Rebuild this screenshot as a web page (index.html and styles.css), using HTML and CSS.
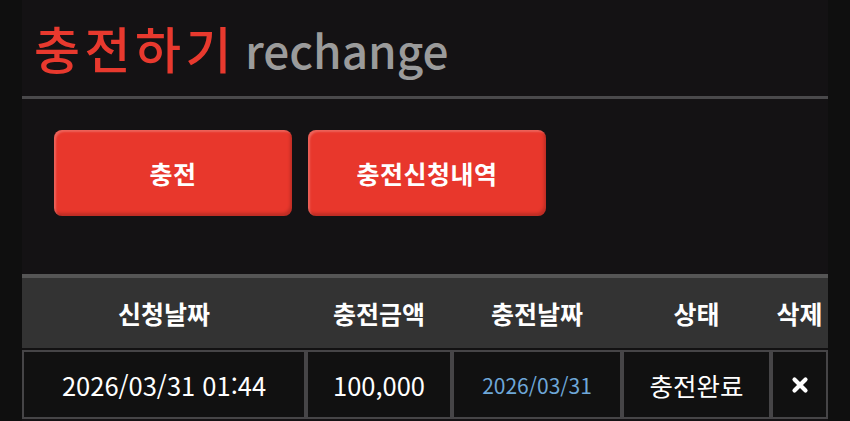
FILE: index.html
```html
<!DOCTYPE html>
<html lang="ko">
<head>
    <meta charset="UTF-8">
    <meta name="viewport" content="width=device-width, initial-scale=1.0">
    <title>충전하기</title>
    <link rel="stylesheet" href="styles.css">
</head>
<body>
    <div class="container">
        <h1 class="page-title">
            <span class="title-ko">충전하기</span>
            <span class="title-en">rechange</span>
        </h1>
        <div class="divider"></div>

        <div class="actions">
            <button class="btn-red">충전</button>
            <button class="btn-red">충전신청내역</button>
        </div>

        <table class="history">
            <thead>
                <tr>
                    <th class="col-date">신청날짜</th>
                    <th class="col-amount">충전금액</th>
                    <th class="col-done">충전날짜</th>
                    <th class="col-status">상태</th>
                    <th class="col-del">삭제</th>
                </tr>
            </thead>
            <tbody>
                <tr>
                    <td>2026/03/31 01:44</td>
                    <td>100,000</td>
                    <td class="done-date">2026/03/31</td>
                    <td>충전완료</td>
                    <td>
                        <!-- delete mark -->
                        <svg class="icon-del" width="18" height="18" viewBox="0 0 18 18">
                            <path d="M3.5 3.5 L14.5 14.5 M14.5 3.5 L3.5 14.5" stroke="#fff" stroke-width="4.2" stroke-linecap="round"/>
                        </svg>
                    </td>
                </tr>
            </tbody>
        </table>
    </div>
</body>
</html>
```

FILE: styles.css
```css
body {
    margin: 0;
    background-color: #0f0f0f;
    font-family: "Noto Sans CJK KR", "Noto Sans", sans-serif;
    color: #fff;
}
.container {
    margin: 0 22px;
    min-height: 421px;
    background-color: #141214;
}
.page-title {
    margin: 0;
    padding: 17px 0 0 12px;
    height: 82px;
    box-sizing: border-box;
    font-weight: 500;
    line-height: 60px;
    white-space: nowrap;
}
.title-ko {
    color: #e8392e;
    font-size: 50px;
    letter-spacing: 4.5px;
}
.title-en {
    color: #9b9b9b;
    font-size: 46px;
}
.divider {
    margin-top: 14px;
    height: 3px;
    background-color: #4a494b;
}
.actions {
    display: flex;
    gap: 16px;
    padding: 31px 32px 0;
}
.btn-red {
    width: 238px;
    height: 86px;
    border: none;
    border-radius: 8px;
    background-color: #e8372c;
    color: #fff;
    font-family: inherit;
    font-size: 25px;
    font-weight: 700;
    letter-spacing: 0.5px;
    box-shadow: inset 2px 2px 2px rgba(255, 255, 255, 0.22), inset -2px -3px 3px rgba(0, 0, 0, 0.18);
    cursor: pointer;
}
.history {
    margin-top: 58px;
    width: 100%;
    border-collapse: separate;
    border-spacing: 0;
    text-align: center;
}
.history th {
    height: 70px;
    background-color: #333;
    border-top: 4px solid #555;
    border-bottom: 2px solid #121112;
    font-size: 25px;
    font-weight: 700;
    padding: 0;
}
.history td {
    height: 65px;
    background-color: #111;
    border: 2px solid #464547;
    font-size: 25.5px;
    padding: 0;
}
.col-date { width: 284px; }
.col-amount { width: 146px; }
.col-done { width: 170px; }
.col-status { width: 149px; }
.history .done-date {
    color: #6ea7d8;
    font-size: 21px;
}
.icon-del {
    display: block;
    margin: 0 auto;
}
```
